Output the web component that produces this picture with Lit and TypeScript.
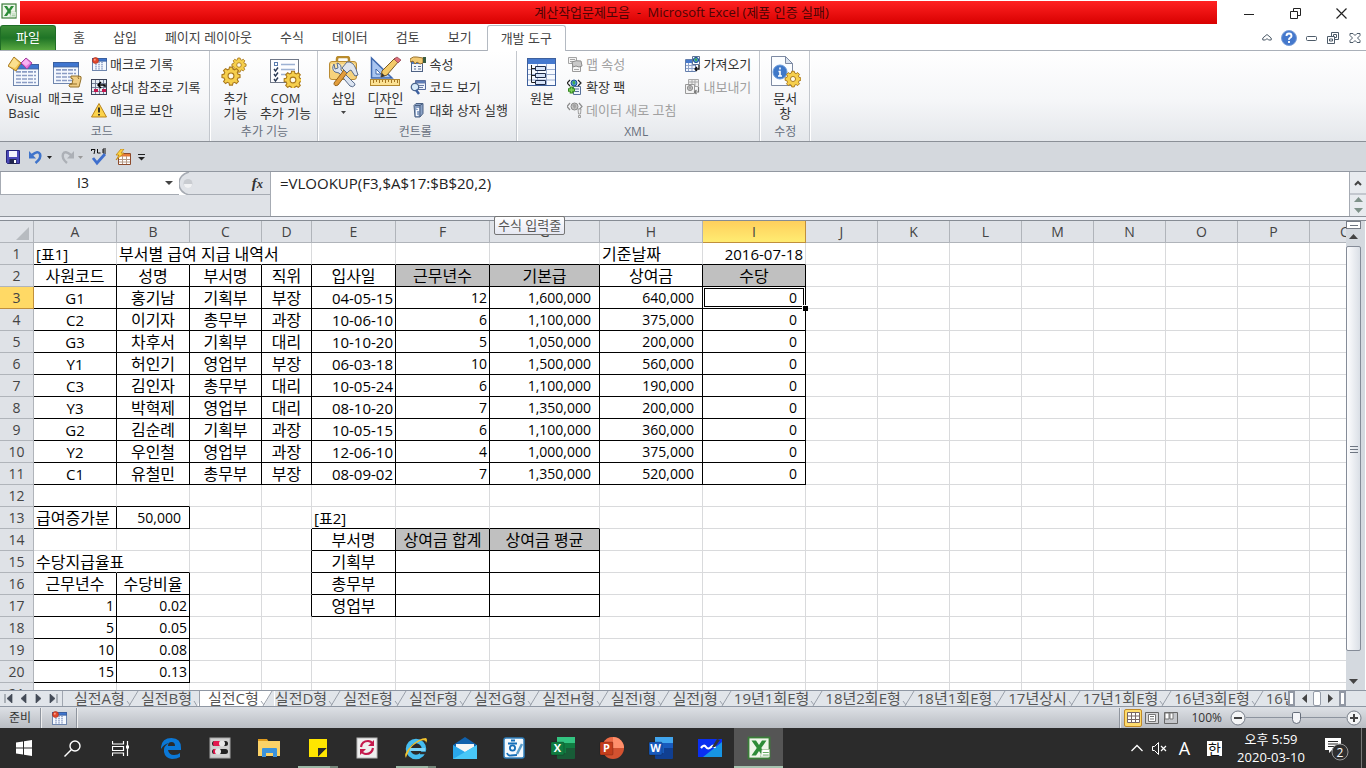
import { LitElement, html, css, svg, nothing, TemplateResult } from "lit";
import { customElement } from "lit/decorators.js";
import { classMap } from "lit/directives/class-map.js";

const icon = (size: number, body: unknown, box = size) =>
  html`<svg width=${size} height=${size} viewBox="0 0 ${box} ${box}" aria-hidden="true">${body}</svg>`;

/* ---------- shared drawing parts ---------- */
const gearPath =
  "M-1.6 -8h3.2l.5 2.2 1.8.8 2-1.3 2.200 2.200-1.300 2 .8 1.800 2.200.5v3.200l-2.200.5-.8 1.800 1.300 2-2.200 2.200-2-1.300-1.800.8-.5 2.200h-3.200l-.5-2.200-1.800-.8-2 1.300-2.200-2.200 1.300-2-.8-1.800-2.200-.5v-3.200l2.200-.5.8-1.800-1.300-2 2.200-2.200 2 1.300 1.800-.8z";
const gear = (x: number, y: number, s: number) => svg`
  <g transform="translate(${x} ${y}) scale(${s}) translate(0 -1.700)">
    <path d=${gearPath} fill="#f6cf4c" stroke="#a9781c" stroke-width="1.200"/>
    <circle cx="0" cy="1.700" r="3.200" fill="#fffbe8" stroke="#a9781c" stroke-width="1.200"/>
  </g>`;
const sheet = (x: number, y: number, w: number, h: number, head = "#3f76d0") => svg`
  <rect x=${x + 0.5} y=${y + 0.5} width=${w - 1} height=${h - 1} fill="#f4f8fe" stroke="#6f86ad"/>
  <rect x=${x + 0.5} y=${y + 0.5} width=${w - 1} height=${h / 5} fill=${head} stroke="#3a5f9f"/>
  ${[0, 1, 2, 3].map((i) => svg`<path d="M${x + 3} ${y + h * 0.36 + i * h * 0.16}H${x + w - 3}" stroke="#8a9cc4" stroke-width=${h > 18 ? 1.6 : 1} stroke-dasharray=${h > 18 ? "5 1" : "2 1"}/>`)}`;
const globe = (x: number, y: number, r: number, gray = false) => svg`
  <circle cx=${x} cy=${y} r=${r} fill=${gray ? "#c4c4c4" : "#4f93dc"} stroke=${gray ? "#8c8c8c" : "#1c5391"}/>
  <path d="M${x - r * 0.6} ${y - r * 0.4}q${r * 0.7} ${-r * 0.6} ${r} 0t${-r * 0.5} ${r * 1.1}z" fill=${gray ? "#a3a3a3" : "#3fae48"}/>`;

const ico = {
  vb: icon(32, svg`${sheet(5, 8, 26, 22)}<path d="M0 10 6 1l7 6-5 8z" fill="#f3c653" stroke="#a77a25"/><path d="M1 10 6 2l5 5-4 5z" fill="#fbe08f"/><path d="m13 7 5-5 6 5-5 6z" fill="#e676dd" stroke="#a5419d"/><path d="m14 7 4-4 4 4-4 3z" fill="#f7b4f2"/>`),
  macro: icon(32, svg`${sheet(3, 6, 26, 22)}<path d="M21 20h8q3 0 2 3l-2 8h-9q-2-1 0-3h2l1-5q-3 0-2-3z" fill="#efcd83" stroke="#93712c"/><path d="M20 28h7M29 20q-2 2 0 3" fill="none" stroke="#93712c"/>`),
  record: icon(16, svg`${sheet(1, 2, 15, 13)}<circle cx="4.500" cy="4.500" r="3" fill="#e2472b" stroke="#a22c17" stroke-width=".6"/><circle cx="3.800" cy="3.700" r="1" fill="#f8a491"/>`),
  relative: icon(16, svg`<rect x=".5" y=".5" width="15" height="15" fill="#e8edf5" stroke="#3b4256"/><path d="M4.500 1v14M8.500 1v14M12.500 1v14M1 4.500h14M1 8.500h14M1 12.500h14" stroke="#6c7690" stroke-width=".9"/><path d="M3 10h4v3H3z M11 10h4v3h-4z" fill="#c2164d"/><path d="M14 8V6H8M10 3 7 6l3 3" fill="none" stroke="#000" stroke-width="1.500"/>`),
  warn: icon(16, svg`<path d="M8 1.500 15.500 15H.5z" fill="#fbd34b" stroke="#b9831b" stroke-linejoin="round"/><path d="M8 5.500v5M8 12v1.600" stroke="#222" stroke-width="1.800"/>`),
  addin: icon(32, svg`${gear(20, 9, 0.72)}${gear(12, 20, 0.92)}`),
  com: icon(32, svg`<rect x="1.500" y="3.500" width="28" height="23" fill="#fdfdff" stroke="#707888"/><rect x="5.500" y="6.500" width="3" height="3" fill="#fff" stroke="#5b7cae"/><path d="m5 13 1.500 2L9 11.500M5 18l1.500 2L9 16.500M5 23l1.500 2L9 21.500" fill="none" stroke="#2b3a55" stroke-width="1.400"/><path d="M12 8.500h14M12 13.500h14M12 18.500h7" stroke="#9db1d3" stroke-width="1.500"/>${gear(24, 24, 0.9)}`),
  insert: icon(32, svg`<path d="M10 6V3q0-2 2-2h8q2 0 2 2v3" fill="none" stroke="#b98b2c" stroke-width="2.500"/><rect x="2.500" y="5.500" width="27" height="18" rx="2.500" fill="#f6d27c" stroke="#ba8c34"/><path d="M4 8h24v6H4z" fill="#fbe5a8"/><path d="M7 8q-3 5 1 8l4 1 11 13q3 2 5-1 0-2-2-3L14 14q1-6-4-7l1 5-3 1z" fill="#dbe4f1" stroke="#5b6d8d"/><path d="m17 14 3 3-9 12q-4 2-4-2z" fill="#e29d3b" stroke="#93601a"/><path d="m15 12 5-6q6-1 9 7l2 6-3 1-4-6-2 1-2 2z" fill="#dfe5ee" stroke="#5e6e88"/>`),
  design: icon(32, svg`<path d="M2.500 2v20H23z" fill="#a9c5f0" stroke="#3f68ae" stroke-width="1.500"/><path d="M7 13v5h5z" fill="#fff" stroke="#3f68ae"/><path d="m12 21 1-6L26 2l4 3-12 14z" fill="#f4cb6a" stroke="#7b5a22"/><path d="m25 3 3-2 4 3-3 3z" fill="#df6f7c" stroke="#8d3c47" stroke-width=".7"/><path d="m12 21 1-4 3 3z" fill="#333"/><rect x="1.500" y="23.500" width="29" height="6" fill="#fbe193" stroke="#b3882f"/><path d="M4.500 24v3M7.500 24v2M10.500 24v3M13.500 24v2M16.500 24v3M19.500 24v2M22.500 24v3M25.500 24v2M28.500 24v3" stroke="#a57521"/>`),
  props: icon(16, svg`<rect x="1.500" y="5.500" width="11" height="10" fill="#f3f6fb" stroke="#4f6385"/><path d="M2 6h10v2H2z" fill="#4f7cc7"/><path d="M4 10.500h2M8 10.500h3M4 13h2M8 13h3" stroke="#5b6f93"/><path d="M0 3q3-3 7-2l6 1v5l-3 1-3-2-2 2-2-3-3 1z" fill="#f2c973" stroke="#8f6926" stroke-width=".9"/><path d="M13 1h3v6h-3z" fill="#385b40"/>`),
  code: icon(16, svg`<path d="M5.500 1.500h10v9h-10z" fill="#eef3fb" stroke="#54699a"/><path d="M6 2h9v2H6zM8 6.500h6M8 8.500h5" fill="#4f7cc7" stroke="#6a7da5"/><circle cx="5" cy="8" r="3.700" fill="#d8ebfa" stroke="#4b668f" stroke-width="1.300"/><path d="m6 11 3 4" stroke="#3c5f9f" stroke-width="2.500"/>`),
  dialog: icon(16, svg`<path d="M4 3.500 6 1.500h7v10l-3 3.500H5z" fill="#8ba2c6" stroke="#4b6183"/><path d="M5 3.500h5V15M10 3.500l3-2" fill="none" stroke="#4b6183"/><path d="M6.500 6.500h2v2h-2v5h2" fill="none" stroke="#f7f9fd" stroke-width="1.200"/>`),
  source: icon(32, svg`<rect x="1.500" y="2.500" width="28" height="27" fill="#f7faff" stroke="#3e609c"/><path d="M2 3h27v5H2z" fill="#4579cf"/><path d="M11.500 8v21M20.500 8v21M2 13.500h27M2 18.500h27M2 24h27" stroke="#9aadd0"/><path d="M5.500 9v17.500M5.500 12.500h4M5.500 19.500h4M5.500 26.500h4" fill="none" stroke="#222"/><path d="M9.500 10.500h10v4h-10zM9.500 17.500h10v4h-10zM9.500 24.500h10v4h-10z" fill="#d7e4f8" stroke="#1f2c4a"/>`),
  mapProps: icon(16, svg`<path d="M1.500 1.500h8v6h-8zM3 3.500h5M3 5.500h5" fill="#f4f4f4" stroke="#a4a4a4"/><path d="M5.500 8.500h8v7h-8z" fill="#f6f6f6" stroke="#9b9b9b"/><path d="M7 13.500h5" stroke="#aaa"/><path d="M5 6q4-2 9-1l1 5-3 1-3-1-3 1z" fill="#c9c9c9" stroke="#8c8c8c"/>`),
  pack: icon(16, svg`<path d="M3 1 0 4l3 3M11 1l3 3-3 3" fill="none" stroke="#222" stroke-width="1.200"/>${globe(7, 4, 3)}<path d="M6.500 7.500h7v8h-7zM8 10h4M8 12.500h4" fill="#eef4fd" stroke="#587098"/><path d="M4.500 7.500v7M1 11h7" stroke="#35891f" stroke-width="3.600"/><path d="M4.500 8.500v5M2 11h5" stroke="#83d35c" stroke-width="1.500"/>`),
  refresh: icon(16, svg`<path d="M3 1 0 4.500 3 8M12 1l3 3.500L12 8" fill="none" stroke="#8d8d8d" stroke-width="1.200"/>${globe(7.5, 4.5, 3.5, true)}<path d="M11 7h3l-.5 5h-2zM11.500 13.500h2v2h-2z" fill="#eee" stroke="#8b8b8b" stroke-width=".8"/>`),
  importer: icon(16, svg`<path d="M1.500 3.500h10v12h-10z" fill="#f5f8fe" stroke="#647fad"/><path d="M2 4h9v3H2z" fill="#4679cc"/><path d="M4.500 7v8M8 7v8M2 9.500h9M2 12.500h9" stroke="#91a5ca"/><path d="M8.500.5h7v8h-7z" fill="#fff" stroke="#5e7395"/>${globe(12, 4, 2.6)}<path d="M15 9v4h-4m2-2-2 2 2 2" fill="none" stroke="#111" stroke-width="1.300"/>`),
  exporter: icon(16, svg`<path d="M4.500.5h10v7h-10zM5 3h9M8 1v6M11 1v6" fill="#efefef" stroke="#a9a9a9"/><path d="M1.500 5.500h9v9h-9z" fill="#f2f2f2" stroke="#999"/>${globe(6, 9, 2.6, true)}<path d="M14.500 8v5h-4m2-2-2 2 2 2" fill="none" stroke="#7a7a7a" stroke-width="1.200"/>`),
  docpane: icon(32, svg`<path d="M2.500.5h14l7 7v22h-21z" fill="#fbfdff" stroke="#7d8aa3"/><path d="M16.500.5v7h7z" fill="#d8e1ef" stroke="#7d8aa3"/><circle cx="11" cy="16" r="7" fill="#3f78c8" stroke="#6a9bdc"/><path d="M11 11.500v2M9.500 15.500H11v4.500M9 20h4" stroke="#fff" stroke-width="1.600" fill="none"/>${gear(24, 23, 0.8)}`),
  save: icon(16, svg`<path d="M1.500 1.500h13v13h-12l-1-1z" fill="#4a49b8" stroke="#25247a"/><path d="M4 2h8v6H4z" fill="#f3f4fc"/><path d="M4.500 10h7v5h-7z" fill="#20254d"/><path d="M9 11h2v3H9z" fill="#fff"/>`),
  undo: icon(16, svg`<path d="M4 6q6-5 8-1 1.500 4.500-4.500 9" fill="none" stroke="#3f74cb" stroke-width="2.600"/><path d="M1 2v7.500h7z" fill="#3f74cb"/>`),
  redo: icon(16, svg`<path d="M12 6Q6 1 4 5q-1.500 4.500 4 9" fill="none" stroke="#acb0b6" stroke-width="2.400"/><path d="M15 2v7.500H8z" fill="#acb0b6"/>`),
  spell: icon(18, svg`<path d="M1.500 1v2M1 1.500h4M5 1.500 4 6M7.500 1v4h3M16 1h-3v4h3M13 3h3" fill="none" stroke="#111" stroke-width="1"/><path d="m3 10 4 5 8-9" fill="none" stroke="#3f6fcd" stroke-width="2.800"/>`),
  calc: icon(16, svg`<path d="M3.500 4.500h12v11h-12z" fill="#fff" stroke="#8c4a2c"/><path d="M4 5h11v2.500H4z" fill="#e57b3a"/><path d="M7.500 7v8M11.500 7v8M4 10.500h11M4 13h11" stroke="#b59a86"/><path d="M6 0 1 6h3l-3 5 8-7H6l3-4z" fill="#fcd440" stroke="#c08516" stroke-width=".8"/>`),
};

const appIcon = (s: number) => icon(s, svg`<rect x="1" y="1" width="14" height="14" fill="#eef6ea" stroke="#3a7d39" stroke-width="1.200"/><path d="M3 3h3l2 3 2-3h3L9.500 8l3.500 5h-3L8 10l-2 3H3l3.500-5z" fill="#2d8c38"/><path d="M10 9h5v5h-6z" fill="#fff" stroke="#9dbd96" stroke-width=".5"/><path d="M10.500 11h4M10.500 12.700h4" stroke="#56a152" stroke-width=".6"/>`, 16);

const office = (letter: string, a: string, b: string, c: string, round: boolean) => html`
  <svg width="26" height="24" viewBox="0 0 26 24" aria-hidden="true">
    ${round
      ? svg`<circle cx="14" cy="12" r="11" fill=${b}/><path d="M14 1a11 11 0 0 1 11 11H14z" fill=${c}/><path d="M14 1v11H3A11 11 0 0 1 14 1z" fill="#ed6c47"/>`
      : svg`<rect x="7" y="1" width="18" height="22" rx="1" fill=${b}/><path d="M7 1h18v6H7z" fill=${c}/><path d="M7 7h18v5H7z" fill=${a}/><path d="M7 7h9v10H7z" fill=${a}/>`}
    <rect x="1" y="6" width="13" height="13" rx="1" fill=${a} stroke="#0003"/>
    <text x="7.500" y="16" text-anchor="middle" font-size="11" font-weight="700" fill="#fff" font-family="Open Sans, sans-serif">${letter}</text>
  </svg>`;

const task: { name: string; art: TemplateResult; state?: string }[] = [
  { name: "Edge", art: icon(22, svg`<path d="M1 10Q2 1 11.500 1 21 1 21 11v2H8q1 5 6 5 4 0 6-2v4q-3 2-8 2-7-1-8-7-1-6 5-9-5 1-8 6zm7-1h7q0-4-3.500-4T8 9z" fill="#0b78d7"/>`) },
  { name: "설정 도구", art: icon(22, svg`<rect x="1" y="1" width="20" height="20" fill="#cfcfcf" stroke="#a7a7a7"/><rect x="3" y="4" width="16" height="5" rx="2.500" fill="#222"/><path d="M5 4h6v5H5q-2-2.500 0-5z" fill="#e3174d"/><circle cx="13" cy="6.500" r="3" fill="#e8e8e8"/><rect x="3" y="12" width="16" height="5" rx="2.500" fill="#222"/><path d="M5 12h3v5H5q-2-2.500 0-5z" fill="#e3174d"/><circle cx="9" cy="14.500" r="3" fill="#e8e8e8"/>`) },
  { name: "파일 탐색기", art: icon(22, svg`<path d="M0 2h9l2 3H0z" fill="#e09c1e"/><path d="M0 4h22v15H0z" fill="#fcd267"/><path d="M4 20v-8q0-1 1-1h13q1 0 1 1v8h-4v-4H8v4z" fill="#3c93dc"/>`) },
  { name: "스티커 메모", state: "open", art: icon(20, svg`<path d="M1 1h18v18H1z" fill="#ffe600"/><path d="M10 19v-9h9z" fill="#2b2b2b"/><path d="M10 19 19 10v9z" fill="#ffe600"/>`) },
  { name: "동기화", art: icon(22, svg`<rect x="1" y="1" width="20" height="20" fill="#efefef" stroke="#b7b7b7"/><path d="M5 10q1-6 7-6 3 0 5 3M17 11q-1 6-7 6-3 0-5-3" fill="none" stroke="#c4194c" stroke-width="2.200"/><path d="M18 3v6h-6zM4 18v-6h6z" fill="#c4194c"/>`) },
  { name: "Internet Explorer", state: "open", art: icon(24, svg`<circle cx="12" cy="13" r="8" fill="none" stroke="#45bdf0" stroke-width="4.500"/><path d="M6 12h15v3H6z" fill="#7fd5f7"/><path d="M16 17h6" stroke="#2e2e2e" stroke-width="2.500"/><path d="M2 22q-3-4 5-12T22 2q2 2 0 5 0-4-6-2Q7 9 4 17q-2 4-2 5z" fill="#f2c22e"/>`) },
  { name: "메일", art: icon(24, svg`<path d="M0 9 12 1l12 8v13H0z" fill="#1061ad"/><path d="M3 8h18v8H3z" fill="#f5f5f5"/><path d="M0 9l12 7 12-7v14H0z" fill="#2aa7ea"/><path d="M0 23 24 9v14z" fill="#48c7f7"/>`) },
  { name: "한컴", art: icon(22, svg`<rect x="1" y="1" width="20" height="20" rx="2" fill="#f4f9fd" stroke="#3080bd" stroke-width="1.500"/><path d="M8 3.500h4M5 6.500h9" stroke="#156eb8" stroke-width="1.800"/><circle cx="9.500" cy="11" r="2.600" fill="none" stroke="#156eb8" stroke-width="1.800"/><path d="M4 16q1 3 4 2.500T14 18" fill="none" stroke="#156eb8" stroke-width="1.800"/><path d="m19 7-5 10" stroke="#5a9cc9" stroke-width="2.500"/>`) },
  { name: "Excel", art: office("X", "#107c41", "#185c37", "#33c481", false) },
  { name: "PowerPoint", art: office("P", "#c43e1c", "#d35230", "#ff8f6b", true) },
  { name: "Word", art: office("W", "#185abd", "#103f91", "#41a5ee", false) },
  { name: "화이트보드", art: html`<svg width="24" height="20" viewBox="0 0 24 20" aria-hidden="true"><path d="M0 1h24v18H0z" fill="#0a2ff0"/><path d="M24 4v15H5z" fill="#1795e4"/><path d="M3 10q3-4 5-1t5 0 4 1" fill="none" stroke="#fff" stroke-width="2.200"/><path d="m14 9 5-8 3 1-5 7z" fill="#333"/></svg>` },
  { name: "Microsoft Excel", state: "active", art: appIcon(24) },
];

/* ---------- worksheet data ---------- */
const widths = [83, 73, 72, 50, 84, 94, 110, 103, 103];
const letters = "ABCDEFGHIJKLMNOPQRSTUVWXYZ".split("");
const rowCount = 50;
const staff = [
  ["G1", "홍기남", "기획부", "부장", "04-05-15", "12", "1,600,000", "640,000", "0"],
  ["C2", "이기자", "총무부", "과장", "10-06-10", "6", "1,100,000", "375,000", "0"],
  ["G3", "차후서", "기획부", "대리", "10-10-20", "5", "1,050,000", "200,000", "0"],
  ["Y1", "허인기", "영업부", "부장", "06-03-18", "10", "1,500,000", "560,000", "0"],
  ["C3", "김인자", "총무부", "대리", "10-05-24", "6", "1,100,000", "190,000", "0"],
  ["Y3", "박혁제", "영업부", "대리", "08-10-20", "7", "1,350,000", "200,000", "0"],
  ["G2", "김순례", "기획부", "과장", "10-05-15", "6", "1,100,000", "360,000", "0"],
  ["Y2", "우인철", "영업부", "과장", "12-06-10", "4", "1,000,000", "375,000", "0"],
  ["C1", "유철민", "총무부", "부장", "08-09-02", "7", "1,350,000", "520,000", "0"],
];
type Cell = { t: string; a: string; gray?: boolean };
const cells = new Map<string, Cell>();
const put = (ref: string, t: string, a: string, gray = false) => cells.set(ref, { t, a, gray });
put("A1", "[표1]", "l"); put("B1", "부서별 급여 지급 내역서", "l"); put("H1", "기준날짜", "l"); put("I1", "2016-07-18", "r");
["사원코드", "성명", "부서명", "직위", "입사일", "근무년수", "기본급", "상여금", "수당"].forEach((t, i) =>
  put(letters[i] + "2", t, "c", [5, 6, 8].includes(i)));
staff.forEach((row, r) => row.forEach((t, i) => put(letters[i] + (r + 3), t, i < 4 ? "c" : i < 6 ? "r" : "m")));
put("A13", "급여증가분", "l"); put("B13", "50,000", "m"); put("E13", "[표2]", "l");
put("E14", "부서명", "c"); put("F14", "상여금 합계", "c", true); put("G14", "상여금 평균", "c", true);
put("A15", "수당지급율표", "l");
["기획부", "총무부", "영업부"].forEach((t, i) => put("E" + (15 + i), t, "c"));
put("A16", "근무년수", "c"); put("B16", "수당비율", "c");
[["1", "0.02"], ["5", "0.05"], ["10", "0.08"], ["15", "0.13"]].forEach(([a, b], i) => {
  put("A" + (17 + i), a, "r"); put("B" + (17 + i), b, "r");
});
const boxes = [[0, 2, 8, 11], [0, 13, 1, 13], [0, 16, 1, 20], [4, 14, 6, 17]];
const boxed = (c: number, r: number) => boxes.some(([a, b, x, y]) => c >= a && c <= x && r >= b && r <= y);
const spill = new Set(["B1", "C1", "A15"]);

const sheets = ["실전A형", "실전B형", "실전C형", "실전D형", "실전E형", "실전F형", "실전G형", "실전H형", "실전I형", "실전J형", "19년1회E형", "18년2회E형", "18년1회E형", "17년상시", "17년1회E형", "16년3회E형", "16년2회E형"];
const ribbonTabs = ["홈", "삽입", "페이지 레이아웃", "수식", "데이터", "검토", "보기", "개발 도구"];

const big = (art: unknown, a: string, b: unknown = nothing, cls = "") =>
  html`<button class="big ${cls}">${art}<span>${a}</span><span>${b}</span></button>`;
const small = (art: unknown, label: string, off = false) =>
  html`<button class="small" ?disabled=${off}>${art}<span>${label}</span></button>`;
const tri = (dir: "u" | "d" | "l" | "r", color = "#444") => {
  const d = { u: "M0 6 4.500 1 9 6z", d: "M0 2h9L4.500 7z", l: "M7 0v9L2 4.500z", r: "M2 0v9l5-4.500z" }[dir];
  return html`<svg width="9" height="9" viewBox="0 0 9 9" aria-hidden="true"><path d=${d} fill=${color}/></svg>`;
};
const caret = (color = "#222") =>
  html`<svg width="5" height="3" viewBox="0 0 5 3" aria-hidden="true"><path d="M0 0h5L2.500 3z" fill=${color}/></svg>`;

@customElement("app-root")
export class AppRoot extends LitElement {
  static styles = css`
    :host { display: flex; flex-direction: column; height: 100vh; overflow: hidden; position: relative; background: #fff;
      font: 13px/16px "Open Sans", "Noto Sans CJK KR", sans-serif; color: #333; }
    * { box-sizing: border-box; }
    button { font: inherit; color: inherit; background: none; border: 0; padding: 0; margin: 0; }
    svg { display: block; flex: none; }
    .title { display: flex; height: 25px; flex: none; padding: 1px 2px 0 1px; gap: 3px; }
    .title .app { padding-top: 2px; }
    .title h1 { flex: 1; margin: 0; height: 23px; text-align: center; font-size: 13px; line-height: 22px; font-weight: 400; white-space: pre;
      color: #4b0505; background: linear-gradient(#ff2222, #d80000); padding-left: 126px; }
    .win { display: flex; margin-left: 6px; }
    .win button { width: 46px; display: grid; place-items: center; }
    .tabs { display: flex; height: 26px; flex: none; border-bottom: 1px solid #aab0b9; color: #444; }
    .tabs button { padding: 0 14px 2px; white-space: nowrap; }
    .tabs .file { width: 56px; padding: 0 0 2px; margin-right: 3px; color: #fff; border: 1px solid #1f6d26; border-bottom: 0;
      border-radius: 3px 3px 0 0; background: linear-gradient(#3c8c36, #1f7426 50%, #58a840); }
    .tabs .on { background: #fff; border: 1px solid #b4bac2; border-bottom: 0; border-radius: 3px 3px 0 0; margin: 0 0 -1px 1px; padding: 0 13px 2px; }
    .tabs .tools { margin-left: auto; display: flex; }
    .tabs .tools button { width: 22px; padding: 0; display: grid; place-items: center; }
    .ribbon { display: flex; height: 91px; flex: none; background: linear-gradient(#fff, #f5f6f8 55%, #e4e7eb); border-bottom: 1px solid #8b9097; }
    .group { display: flex; flex-direction: column; border-right: 1px solid #c3c7cd; box-shadow: 1px 0 #fff; margin-right: 1px; padding: 0 8px 0 3px; }
    .group.tight { padding-right: 3px; }
    .group h2 { margin: 0; font-size: 12px; font-weight: 400; color: #68707d; text-align: center; line-height: 18px; }
    .tools-row { display: flex; flex: 1; }
    .big { display: flex; flex-direction: column; align-items: center; width: 42px; padding-top: 5px; line-height: 15px; white-space: nowrap; }
    .big svg { margin-bottom: 3px; }
    .big .arrow { margin: 5px 0 0; }
    .wide { width: 58px; }
    .stack { display: flex; flex-direction: column; padding: 1px 0 0 4px; }
    .small { display: flex; align-items: center; gap: 3px; height: 23px; white-space: nowrap; }
    .small:disabled { color: #a0a0a0; }
    .xml { display: flex; gap: 4px; }
    .group.code { padding-right: 9px; }
    .qat { display: flex; align-items: center; gap: 7px; height: 30px; flex: none; padding: 1px 0 0 5px; background: #d4d8dd; border-bottom: 1px solid #9298a1; }
    .qat button { display: flex; align-items: center; gap: 3px; }
    .formula { display: flex; height: 45px; flex: none; background: #dfe2e7; border-bottom: 1px solid #8d929a; }
    .left { width: 271px; border-right: 1px solid #a6abb3; }
    .names { display: flex; height: 23px; border-bottom: 1px solid #a6abb3; }
    .names .box { display: flex; align-items: center; width: 179px; padding-right: 6px; background: #fff; border-left: 1px solid #a6abb3; }
    input, textarea { font: inherit; color: #222; border: 0; padding: 0; margin: 0; outline: 0; background: none; resize: none; }
    .names input { flex: 1; min-width: 0; text-align: center; font-size: 14px; }
    .names .fx { flex: 1; display: flex; align-items: center; justify-content: space-between; padding-right: 7px; font: italic bold 15px/20px "Liberation Serif", serif; }
    .formula textarea { flex: 1; min-width: 0; background: #fff; font-size: 15px; line-height: 20px; padding: 1px 9px; overflow: hidden; }
    .updown { width: 17px; display: flex; flex-direction: column; align-items: center; border-left: 1px solid #a6abb3; background: #e8ebef; }
    .updown button { width: 100%; flex: 1; display: grid; place-items: center; }
    .updown .top { flex: 2; border-bottom: 2px solid #c3c7ce; }
    .splitter { height: 4px; flex: none; background: #eef0f6; border-bottom: 1px solid #868c94; }
    .work { flex: 1; min-height: 0; display: flex; background: #dfe2e7; }
    .view { flex: 1; min-width: 0; overflow: hidden; background: #fff; }
    table { border-collapse: separate; border-spacing: 0; table-layout: fixed; width: 0; }
    th, td { height: 22px; padding: 0; border: solid #d9dadc; border-width: 0 1px 1px 0; line-height: 20px; white-space: nowrap; }
    th { font-weight: 400; font-size: 14px; color: #444; background: #dfe2e7; border-color: #b0b4ba; text-align: center; }
    th.hot { background: linear-gradient(#ffcf5c, #ffec72); border-color: #c08f3c; }
    tbody th.hot { background: #ffd965; }
    td { color: #000; font-size: 14px; }
    td.l { text-align: left; padding-left: 2px; }
    td.c { text-align: center; }
    td.r { text-align: right; padding-right: 2px; }
    td.m { text-align: right; padding-right: 8px; }
    td.mixed { font-size: 15px; }
    td.hangul { font-size: 16px; }
    td.bb { border-bottom-color: #000; }
    td.br { border-right-color: #000; }
    td.gray { background: #c0c0c0; }
    td.open { border-right-color: transparent; }
    td.sel { position: relative; }
    td.sel::after { content: ""; position: absolute; inset: 1px; border: 1px solid #000; }
    td.sel::before { content: ""; position: absolute; right: -3px; bottom: -3px; width: 5px; height: 5px; background: #000; border: solid #fff; border-width: 1px 0 0 1px; z-index: 1; }
    .corner svg { margin: 4px 4px 0 auto; }
    .vbar { width: 20px; padding-right: 4px; display: flex; flex-direction: column; align-items: center; background: #d4d9df; border-right: 1px solid #fff; }
    .vbar button, .vbar .handle { width: 100%; flex: none; display: grid; place-items: center; height: 17px; }
    .vbar .handle { height: 8px; border: 1px solid #777d88; background: linear-gradient(#6e7682, #6e7682) center / 8px 1px no-repeat #fff; }
    .vbar .thumb { flex: 1; width: 100%; border: 1px solid #858c98; border-radius: 2px; background: linear-gradient(90deg, #fdfdfe, #dadfe6); display: grid; place-items: center; }
    .vbar .rest { height: 22px; }
    .sheets { display: flex; height: 17px; flex: none; background: #e1e5ea; border: solid #8f97a3; border-width: 1px 0 1px; }
    .nav { display: flex; width: 63px; padding: 0 4px; justify-content: space-between; align-items: center; border-right: 1px solid #a0a6b0; }
    .list { display: flex; flex: 1; min-width: 0; overflow: hidden; padding-left: 11px; font-size: 15px; color: #555; }
    .list button { display: flex; flex: none; white-space: nowrap; line-height: 14px; }
    .list .slant { margin: 0 1px; }
    .list .now { background: #fff; margin-left: -8px; padding-left: 8px; }
    .hbar { display: flex; align-items: center; width: 58px; justify-content: space-between; }
    .hbar i { width: 7px; height: 15px; border: 2px solid #9298a4; background: #fff; }
    .hbar b { width: 8px; height: 15px; border: 1px solid #959ca8; border-radius: 2px; background: #fff; }
    .edge { width: 20px; }
    .status { display: flex; align-items: center; height: 21px; flex: none; font-size: 12px; padding: 0 4px 0 9px; background: linear-gradient(#dde0e5, #b9bdc3); }
    .status .bar { width: 2px; height: 20px; background: #8f959e; border-right: 1px solid #eee; margin: 0 9px; }
    .status .bar.push { margin: 0 3px 0 auto; }
    .status .views { display: flex; gap: 1px; margin-right: 11px; }
    .views button { width: 18px; height: 18px; display: grid; place-items: center; }
    .views .on { background: #ffdc6c; border: 1px solid #c08a28; border-radius: 2px; }
    .zoom { display: flex; align-items: center; gap: 0; margin-left: 8px; }
    .zoom input { appearance: none; width: 100px; height: 16px; background: linear-gradient(#8c939e, #8c939e) center / 100% 1px no-repeat; }
    .zoom input::-webkit-slider-thumb { appearance: none; width: 9px; height: 12px; border: 1px solid #656d7a; border-radius: 2px 2px 5px 5px; background: #f4f5f8; }
    .task { display: flex; height: 40px; flex: none; background: #2b2b2b; color: #fff; }
    .task button { width: 49px; display: grid; place-items: center; }
    .task .sys { width: 48px; }
    .task .apps { display: flex; margin-left: 2px; }
    .task .open { background: linear-gradient(90deg, #9cb8a6 32px, #738579 32px) center bottom / 40px 2px no-repeat; }
    .task .active { background: linear-gradient(#a6c3b0, #a6c3b0) bottom / 100% 2px no-repeat #555; }
    .tray { display: flex; margin-left: auto; align-items: center; padding-right: 4px; }
    .tray button { width: 23px; height: 40px; }
    .tray .ime { width: 27px; font-size: 18px; }
    .tray .han { width: 33px; }
    .tray .han span { background: #fff; color: #111; font-size: 14px; line-height: 15px; width: 15px; text-align: center; }
    .tray .clock { width: 80px; line-height: 18px; place-content: center; justify-items: center; }
    .tray .note { width: 51px; border-right: 1px solid #777; }
    .tip { position: absolute; left: 494px; top: 216px; height: 19px; padding: 0 3px; font-size: 13px; line-height: 16px; color: #555;
      border: 1px solid #767676; border-radius: 2px; background: linear-gradient(#fff, #e6e8f2); }
  `;

  private cell(c: number, r: number) {
    const ref = letters[c] + r;
    const v = cells.get(ref);
    const cls: Record<string, boolean> = {
      gray: !!v?.gray,
      bb: boxed(c, r) || boxed(c, r + 1),
      br: boxed(c, r) || boxed(c + 1, r),
      open: spill.has(ref),
      sel: ref === "I3",
      hangul: !!v && /^[가-힣 ]+$/.test(v.t),
      mixed: !!v && (/^[A-Z[]/.test(v.t) || /\d-\d/.test(v.t)),
    };
    if (v) cls[v.a] = true;
    return html`<td class=${classMap(cls)}>${v ? v.t : nothing}</td>`;
  }

  render() {
    return html`
      <header class="title">
        <div class="app">${appIcon(16)}</div>
        <h1>계산작업문제모음  -  Microsoft Excel (제품 인증 실패)</h1>
        <div class="win">
          <button aria-label="최소화">${icon(11, svg`<path d="M0 6.500h10" stroke="#222"/>`)}</button>
          <button aria-label="이전 크기로">${icon(11, svg`<path d="M.5 3.500h7v7h-7zM3.500 3V.5h7v7H8" fill="none" stroke="#222"/>`)}</button>
          <button aria-label="닫기">${icon(11, svg`<path d="m.5.5 10 10m0-10-10 10" stroke="#222" stroke-width="1.200"/>`)}</button>
        </div>
      </header>

      <nav class="tabs">
        <button class="file">파일</button>
        ${ribbonTabs.map((t, i) => html`<button class=${i === 7 ? "on" : ""}>${t}</button>`)}
        <div class="tools">
          <button aria-label="리본 최소화">${icon(10, svg`<path d="M.8 5 5 1.500 9.200 5v2H6.500L5 5.500 3.500 7H.8z" fill="#fff" stroke="#4d5b69"/>`)}</button>
          <button aria-label="도움말">${icon(16, svg`<circle cx="8" cy="8" r="7.500" fill="#4478cc" stroke="#7b9fd8"/><path d="M5.500 6Q5.500 3.500 8 3.500T10.500 6q0 1-1.300 1.800T8 9.800M8 11v2" fill="none" stroke="#fff" stroke-width="1.900"/>`)}</button>
          <button aria-label="창 최소화">${icon(11, svg`<rect x=".5" y="4.500" width="10" height="4" rx="1" fill="#fff" stroke="#4d5b69"/>`)}</button>
          <button aria-label="창 복원">${icon(12, svg`<path d="M4.500.5h7v7h-7z" fill="#fff" stroke="#4d5b69"/><path d="M6.500 2.500h3v3h-3z" fill="none" stroke="#4d5b69"/><path d="M.5 4.500h7v7h-7z" fill="#fff" stroke="#4d5b69"/><path d="M2.500 7h3v2h-3z" fill="none" stroke="#4d5b69"/>`)}</button>
          <button aria-label="창 닫기">${icon(12, svg`<path d="M1 1.500h3l2 2 2-2h3v2L8.500 6 11 8.500v2H8l-2-2-2 2H1v-2L3.500 6 1 3.500z" fill="#fff" stroke="#4d5b69"/>`)}</button>
        </div>
      </nav>

      <section class="ribbon">
        <div class="group code">
          <div class="tools-row">
            ${big(ico.vb, "Visual", "Basic")}${big(ico.macro, "매크로")}
            <div class="stack">${small(ico.record, "매크로 기록")}${small(ico.relative, "상대 참조로 기록")}${small(ico.warn, "매크로 보안")}</div>
          </div>
          <h2>코드</h2>
        </div>
        <div class="group tight">
          <div class="tools-row">${big(ico.addin, "추가", "기능")}${big(ico.com, "COM", "추가 기능", "wide")}</div>
          <h2>추가 기능</h2>
        </div>
        <div class="group">
          <div class="tools-row">
            ${big(ico.insert, "삽입", html`<svg class="arrow" width="5" height="3" viewBox="0 0 5 3"><path d="M0 0h5L2.500 3z" fill="#444"/></svg>`)}${big(ico.design, "디자인", "모드")}
            <div class="stack">${small(ico.props, "속성")}${small(ico.code, "코드 보기")}${small(ico.dialog, "대화 상자 실행")}</div>
          </div>
          <h2>컨트롤</h2>
        </div>
        <div class="group">
          <div class="tools-row">
            ${big(ico.source, "원본")}
            <div class="xml">
              <div class="stack">${small(ico.mapProps, "맵 속성", true)}${small(ico.pack, "확장 팩")}${small(ico.refresh, "데이터 새로 고침", true)}</div>
              <div class="stack">${small(ico.importer, "가져오기")}${small(ico.exporter, "내보내기", true)}</div>
            </div>
          </div>
          <h2>XML</h2>
        </div>
        <div class="group tight">
          <div class="tools-row">${big(ico.docpane, "문서", "창")}</div>
          <h2>수정</h2>
        </div>
      </section>

      <div class="qat">
        <button aria-label="저장">${ico.save}</button>
        <button aria-label="실행 취소">${ico.undo}${caret()}</button>
        <button aria-label="다시 실행">${ico.redo}${caret("#999")}</button>
        <button aria-label="맞춤법 검사">${ico.spell}</button>
        <button aria-label="지금 계산">${ico.calc}</button>
        <button aria-label="빠른 실행 도구 모음 사용자 지정"><svg width="8" height="8" viewBox="0 0 8 8"><path d="M0 1.500h7" stroke="#222"/><path d="M0 4h7L3.500 7.500z" fill="#222"/></svg></button>
      </div>

      <section class="formula">
        <div class="left">
          <div class="names">
            <div class="box"><input aria-label="이름 상자" value="I3" />${icon(8, svg`<path d="M0 2h8L4 6z" fill="#444"/>`)}</div>
            <div class="fx">
              <svg width="20" height="23" viewBox="0 0 20 23" aria-hidden="true"><path d="M0 0h10Q0 3 0 11.500T10 23H0z" fill="#fff"/><path d="M10 0Q0 3 0 11.500T10 23" fill="none" stroke="#a6abb3" stroke-width="1.500"/><circle cx="9" cy="11.500" r="4.500" fill="#c9ccd1"/><path d="M5 12a4 4 0 0 0 8 0z" fill="#f1f2f4"/></svg>
              <span>f<small>x</small></span>
            </div>
          </div>
        </div>
        <textarea aria-label="수식 입력줄" spellcheck="false">=VLOOKUP(F3,$A$17:$B$20,2)</textarea>
        <div class="updown">
          <button class="top" aria-label="수식 입력줄 축소">${icon(8, svg`<path d="m1 6 3-3 3 3" fill="none" stroke="#444" stroke-width="2"/>`)}</button>
          <button aria-label="위로">${tri("u", "#7e9189")}</button>
          <button aria-label="아래로">${tri("d", "#7e9189")}</button>
        </div>
      </section>
      <div class="splitter"></div>

      <main class="work">
        <div class="view">
          <table aria-label="워크시트">
            <colgroup><col style="width:34px" />${letters.map((_, i) => html`<col style="width:${widths[i] ?? 72}px" />`)}</colgroup>
            <thead><tr>
              <th class="corner">${icon(13, svg`<path d="M13 0v13H0z" fill="#b7bbc0"/>`)}</th>
              ${letters.map((l) => html`<th scope="col" class=${l === "I" ? "hot" : ""}>${l}</th>`)}
            </tr></thead>
            <tbody>
              ${Array.from({ length: rowCount }, (_, i) => i + 1).map((r) => html`<tr>
                <th scope="row" class=${r === 3 ? "hot" : ""}>${r}</th>${letters.map((_, c) => this.cell(c, r))}
              </tr>`)}
            </tbody>
          </table>
        </div>
        <div class="vbar">
          <div class="handle"></div>
          <button aria-label="위로 스크롤">${tri("u")}</button>
          <div class="thumb">${icon(8, svg`<path d="M0 1.500h8M0 4.500h8M0 7.500h8" stroke="#6e7682"/>`)}</div>
          <div class="rest"></div>
          <button aria-label="아래로 스크롤">${tri("d")}</button>
        </div>
      </main>

      <div class="sheets">
        <div class="nav">
          ${["M1 0v9M8 0v9L3 4.500z", "M7 0v9L2 4.500z", "M2 0v9l5-4.500z", "M8 0v9M1 0v9l5-4.500z"].map((d, i) => html`<button aria-label=${["첫 시트", "이전 시트", "다음 시트", "마지막 시트"][i]}>${icon(9, svg`<path d=${d} fill="#444b57" stroke="#444b57" stroke-width=".7"/>`)}</button>`)}
        </div>
        <div class="list">
          ${sheets.map((s, i) => html`<button class=${i === 2 ? "now" : ""}>${s}<svg class="slant" width="14" height="15" viewBox="0 0 14 15"><path d="M4 15 12 0h2v15z" fill=${i === 1 ? "#fff" : "#e1e5ea"}/><path d=${i === 1 ? "M1 10l3 5M6.500 0v15" : "M1 10l3 4M3 15 12 0"} fill="none" stroke="#9aa0aa"/></svg></button>`)}
        </div>
        <div class="hbar"><i></i>${tri("l")}<b></b>${tri("r")}<i></i></div>
        <div class="edge"></div>
      </div>

      <footer class="status">
        <span>준비</span><div class="bar"></div>${ico.record}<div class="bar"></div>
        <div class="bar push"></div>
        <div class="views">
          <button class="on" aria-label="기본">${icon(13, svg`<path d="M.5 1.500h12v10H.5zM.5 5h12M.5 8.500h12M4.500 1.500v10M8.500 1.500v10" fill="#fff" stroke="#766"/>`)}</button>
          <button aria-label="페이지 레이아웃">${icon(14, svg`<path d="M.5 1.500h13v11H.5z" fill="#d5d5d7" stroke="#666"/><path d="M3.500 3.500h7v7h-7zM5 5.500h4M5 8h4" fill="#fff" stroke="#777"/>`)}</button>
          <button aria-label="페이지 나누기">${icon(14, svg`<path d="M.5 1.500h13v11H.5z" fill="#c4c6ca" stroke="#666"/><path d="M1 2h4v6H1zM6 2h3v6H6z" fill="#fff" stroke="#777"/>`)}</button>
        </div>
        <label for="zoom">100%</label>
        <div class="zoom">
          <button aria-label="축소">${icon(16, svg`<circle cx="8" cy="8" r="7" fill="#f4f5f6" stroke="#777e89"/><path d="M4 8h8" stroke="#444" stroke-width="2"/>`)}</button>
          <input id="zoom" type="range" min="0" max="100" value="50" />
          <button aria-label="확대">${icon(16, svg`<circle cx="8" cy="8" r="7" fill="#f4f5f6" stroke="#777e89"/><path d="M4 8h8M8 4v8" stroke="#444" stroke-width="2"/>`)}</button>
        </div>
      </footer>

      <div class="task">
        <button class="sys" aria-label="시작">${icon(16, svg`<path d="M0 2.500 7 1.500v6H0zM8 1.300 16 0v7.500H8zM0 8.500h7v6l-7-1zM8 8.500h8V16l-8-1.300z" fill="#fff"/>`)}</button>
        <button class="sys" aria-label="검색">${icon(17, svg`<circle cx="11" cy="6" r="5" fill="none" stroke="#fff" stroke-width="1.400"/><path d="m7.500 9.500-7 7" stroke="#fff" stroke-width="1.400"/>`)}</button>
        <button class="sys" aria-label="작업 보기">${icon(17, svg`<path d="M.5 1v3h11V1M.5 16v-3h11v3M.5 6.500h11v4H.5zM15.500 1v15" fill="none" stroke="#fff" stroke-width="1.200"/><path d="M14 5.500h3v3h-3z" fill="#fff"/>`)}</button>
        <div class="apps">${task.map((t) => html`<button class=${t.state ?? ""} aria-label=${t.name}>${t.art}</button>`)}</div>
        <div class="tray">
          <button aria-label="숨겨진 아이콘">${icon(12, svg`<path d="m.5 9 5.500-5.500L11.500 9" fill="none" stroke="#fff" stroke-width="1.300"/>`)}</button>
          <button aria-label="음소거">${icon(15, svg`<path d="M.5 5.500h2l4-4v12l-4-4h-2z" fill="none" stroke="#fff"/><path d="m9 5 5 5m0-5-5 5" stroke="#fff" stroke-width="1.200"/>`)}</button>
          <button class="ime">A</button>
          <button class="han"><span>한</span></button>
          <button class="clock"><span>오후 5:59</span><span>2020-03-10</span></button>
          <button class="note" aria-label="알림">${icon(26, svg`<path d="M2 3h16v12h-9l-3 3v-3H2z" fill="#fff"/><path d="M5 6.500h10M5 9h10M5 11.500h7" stroke="#2b2b2b"/><circle cx="17" cy="17" r="8" fill="#2f2f2f" stroke="#999"/><text x="17" y="21.500" text-anchor="middle" font-size="12" fill="#fff" font-family="Open Sans, sans-serif">2</text>`)}</button>
        </div>
      </div>
      <div class="tip" role="tooltip">수식 입력줄</div>
    `;
  }
}
